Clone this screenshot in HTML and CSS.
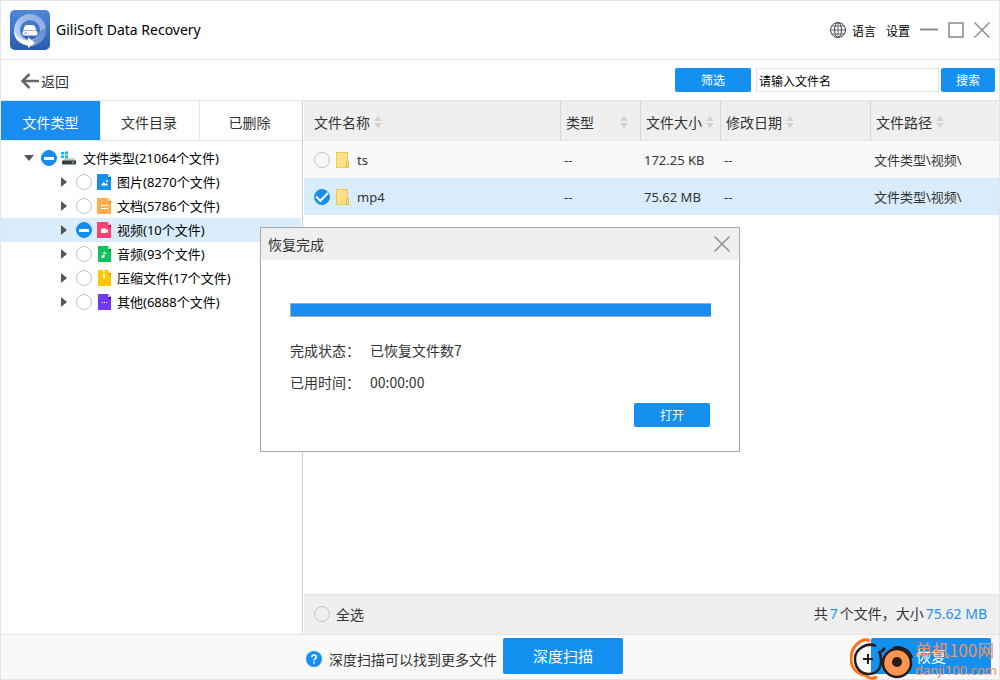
FILE: index.html
```html
<!DOCTYPE html>
<html lang="zh-CN">
<head>
<meta charset="utf-8">
<title>GiliSoft Data Recovery</title>
<link rel="stylesheet" href="styles.css">
</head>
<body>
<svg class="defs" aria-hidden="true">
  <defs>
    <linearGradient id="logo-bg" x1="0" y1="0" x2="0" y2="1"><stop offset="0" stop-color="#5087d8"/><stop offset="1" stop-color="#2a5cae"/></linearGradient>
    <linearGradient id="ring" x1="1" y1="0" x2="0" y2="1"><stop offset="0" stop-color="#86abe5"/><stop offset="1" stop-color="#c3d6f3"/></linearGradient>
    <linearGradient id="folder-fill" x1="0" y1="0" x2="1" y2="1"><stop offset="0" stop-color="#ffe48f"/><stop offset="1" stop-color="#ffdc85"/></linearGradient>
    <symbol id="folder" viewBox="0 0 14 16"><path d="M.5.5h11v9h1v6H.5z" fill="url(#folder-fill)" stroke="#efc94c"/><path d="M10.500 15.500v-4.500l1-1.500h1v6z" fill="#ffe9a8" stroke="#e3b92f"/></symbol>
    <symbol id="sort" viewBox="0 0 8 12"><path d="M4 0l4 5H0zM4 12l4-5H0z" fill="#d3d3d3"/></symbol>
    <symbol id="close" viewBox="0 0 16 16"><path d="M.5.5l15 15M15.500.5l-15 15" stroke="#8f8f8f" stroke-width="1.500" fill="none"/></symbol>
  </defs>
</svg>
<div class="app">
  <header class="titlebar">
    <svg class="logo" viewBox="0 0 40 40" aria-hidden="true">
      <rect width="40" height="40" rx="5" fill="url(#logo-bg)"/>
      <circle cx="20" cy="20" r="13" fill="none" stroke="url(#ring)" stroke-width="6"/>
      <path d="M36 18a16 16 0 0 1-13 18v-6a10 10 0 0 0 7-9z" fill="#4a79c6" opacity=".6"/>
      <path d="M4 20c2 7 6 10 14 10.500V27l7 6-7 5v-3C9 34 4 29 4 20z" fill="#fff"/>
      <path d="M17 15h6q1.500 0 2 1.500l1.500 4H13l1.500-4Q15 15 17 15z" fill="#fff"/>
      <rect x="12.500" y="21" width="15" height="4.500" rx="1.500" fill="#fff"/>
      <path d="M14.500 23.200h2" stroke="#3c70c2"/>
    </svg>
    <h1 class="title">GiliSoft Data Recovery</h1>
    <button class="bare menu-button language" type="button">
      <svg class="icon16" viewBox="0 0 16 16" fill="none" stroke="#3d434b" aria-hidden="true"><circle cx="8" cy="8" r="7.500"/><ellipse cx="8" cy="8" rx="3.500" ry="7.500"/><path d="M8 .5v15M.5 8h15M2 4h12M2 12h12" stroke-width=".8"/></svg>
      语言
    </button>
    <button class="bare menu-button" type="button">设置</button>
    <div class="window-buttons">
      <button class="bare" type="button" aria-label="最小化"><svg class="icon18" viewBox="0 0 18 18" aria-hidden="true"><path d="M0 8.500h18" stroke="#8f8f8f" stroke-width="2"/></svg></button>
      <button class="bare" type="button" aria-label="最大化"><svg class="icon16" viewBox="0 0 16 16" aria-hidden="true"><rect x="1" y="1" width="14" height="14" fill="none" stroke="#8f8f8f" stroke-width="1.600"/></svg></button>
      <button class="bare" type="button" aria-label="关闭"><svg class="icon16"><use href="#close"/></svg></button>
    </div>
  </header>

  <div class="toolbar">
    <button class="bare back" type="button"><svg class="back-icon" viewBox="0 0 18 16" fill="none" stroke="#666" stroke-width="2.500" aria-hidden="true"><path d="M8.500 1L1.500 8l7 7M1.500 8H18"/></svg>返回</button>
    <form class="search">
      <button class="primary filter" type="button">筛选</button>
      <input class="search-box" type="text" placeholder="请输入文件名" aria-label="请输入文件名">
      <button class="primary find" type="button">搜索</button>
    </form>
  </div>

  <main class="content">
    <aside class="sidebar">
      <nav class="tabs">
        <button class="tab active" type="button">文件类型</button>
        <button class="tab" type="button">文件目录</button>
        <button class="tab" type="button">已删除</button>
      </nav>
      <ul class="tree">
        <li class="node root">
          <span class="arrow open"></span>
          <input class="check partial" type="checkbox" id="n0">
          <svg class="drive" viewBox="0 0 16 14" aria-hidden="true"><path d="M0 1h3v2.500H0zM4 .5h3v3H4zM0 4.500h3V7H0zM4 4.500h3v3H4z" fill="#12b7f5"/><path d="M3 8l5-1h5l2 3H1z" fill="#c9c9c9"/><rect x="1" y="9.500" width="14" height="4" rx="1" fill="#3a3a3a"/><path d="M11 11.500h2" stroke="#45e045" stroke-width="1.500"/></svg>
          <label for="n0">文件类型(21064个文件)</label>
        </li>
        <li class="node">
          <span class="arrow"></span><input class="check" type="checkbox" id="n1">
          <svg class="file" viewBox="0 0 14 16" aria-hidden="true"><path d="M0 0h11l3 3v13H0z" fill="#168ff0"/><path d="M11 0l3 3h-3z" fill="#b9ddfb"/><path d="M11 3h3v3z" fill="#0668c5"/><path d="M4 11.500l2.500-3.500 2 2 1-1 1.500 2.500z" fill="#fff"/><circle cx="10" cy="7" r="1" fill="#fff"/></svg>
          <label for="n1">图片(8270个文件)</label>
        </li>
        <li class="node">
          <span class="arrow"></span><input class="check" type="checkbox" id="n2">
          <svg class="file" viewBox="0 0 14 16" aria-hidden="true"><path d="M0 0h11l3 3v13H0z" fill="#ffb048"/><path d="M11 0l3 3h-3z" fill="#ffe2ba"/><path d="M11 3h3v3z" fill="#f08a00"/><path d="M4 7.500h7M4 10.500h7" stroke="#fff"/></svg>
          <label for="n2">文档(5786个文件)</label>
        </li>
        <li class="node selected">
          <span class="arrow"></span><input class="check partial" type="checkbox" id="n3">
          <svg class="file" viewBox="0 0 14 16" aria-hidden="true"><path d="M0 0h11l3 3v13H0z" fill="#ff4270"/><path d="M11 0l3 3h-3z" fill="#ffc0cf"/><path d="M11 3h3v3z" fill="#c90048"/><path d="M4 6.500h5v1.500l2-1v4l-2-1v1H4z" fill="#fff"/></svg>
          <label for="n3">视频(10个文件)</label>
        </li>
        <li class="node">
          <span class="arrow"></span><input class="check" type="checkbox" id="n4">
          <svg class="file" viewBox="0 0 14 16" aria-hidden="true"><path d="M1 0h10l3 3v13H1z" fill="#0ec35e"/><path d="M11 0l3 3h-3z" fill="#b3ecca"/><path d="M11 3h3v3z" fill="#079243"/><path d="M7 10.500V6l2.500 1.500" fill="none" stroke="#fff"/><circle cx="6" cy="10.500" r="1.500" fill="#fff"/></svg>
          <label for="n4">音频(93个文件)</label>
        </li>
        <li class="node">
          <span class="arrow"></span><input class="check" type="checkbox" id="n5">
          <svg class="file" viewBox="0 0 14 16" aria-hidden="true"><path d="M1 0h10l3 3v13H1z" fill="#ffc800"/><path d="M11 0l3 3h-3z" fill="#fff0b0"/><path d="M11 3h3v3z" fill="#ef9600"/><path d="M6 0h1v1h1v1H7v1h1v1H6V3h1V2H6zM6 5h2v3H6z" fill="#fff"/></svg>
          <label for="n5">压缩文件(17个文件)</label>
        </li>
        <li class="node">
          <span class="arrow"></span><input class="check" type="checkbox" id="n6">
          <svg class="file" viewBox="0 0 14 16" aria-hidden="true"><path d="M1 0h10l3 3v13H1z" fill="#7038f0"/><path d="M11 0l3 3h-3z" fill="#d2c0fb"/><path d="M11 3h3v3z" fill="#3b00b5"/><path d="M5 8.500h1M7 8.500h1M9 8.500h1" stroke="#fff"/></svg>
          <label for="n6">其他(6888个文件)</label>
        </li>
      </ul>
    </aside>

    <section class="files">
      <div class="table-area">
        <table class="table">
          <colgroup><col class="col-name"><col class="col-type"><col class="col-size"><col class="col-date"><col></colgroup>
          <thead>
            <tr>
              <th class="name-head"><span class="head">文件名称<svg class="sort"><use href="#sort"/></svg></span></th>
              <th><span class="head spread">类型<svg class="sort"><use href="#sort"/></svg></span></th>
              <th><span class="head">文件大小<svg class="sort"><use href="#sort"/></svg></span></th>
              <th><span class="head">修改日期<svg class="sort"><use href="#sort"/></svg></span></th>
              <th><span class="head">文件路径<svg class="sort"><use href="#sort"/></svg></span></th>
            </tr>
          </thead>
          <tbody>
            <tr class="odd">
              <td class="name-cell"><span class="entry"><input class="check" type="checkbox" id="f1"><svg class="folder"><use href="#folder"/></svg><label for="f1">ts</label></span></td>
              <td>--</td><td>172.25 KB</td><td>--</td><td>文件类型\视频\</td>
            </tr>
            <tr class="selected">
              <td class="name-cell"><span class="entry"><input class="check" type="checkbox" id="f2" checked><svg class="folder"><use href="#folder"/></svg><label for="f2">mp4</label></span></td>
              <td>--</td><td>75.62 MB</td><td>--</td><td>文件类型\视频\</td>
            </tr>
          </tbody>
        </table>
      </div>
      <div class="summary">
        <input class="check" type="checkbox" id="all"><label for="all">全选</label>
        <p class="totals">共<b>7</b>个文件，大小<b>75.62 MB</b></p>
      </div>
    </section>
  </main>

  <footer class="footer">
    <svg class="icon16" viewBox="0 0 16 16" aria-hidden="true"><circle cx="8" cy="8" r="8" fill="#1790f2"/><path d="M5.800 6.200c0-3 4.400-2.800 4.400-.2 0 1.600-2.200 1.600-2.200 3.400" fill="none" stroke="#fff" stroke-width="1.600"/><path d="M7.200 10.800h1.700v1.700H7.200z" fill="#fff"/></svg>
    <span class="hint">深度扫描可以找到更多文件</span>
    <button class="primary big" type="button">深度扫描</button>
    <div class="recover">
      <button class="primary big" type="button">恢复</button>
      <div class="watermark">
        <svg class="mark" viewBox="0 0 64 42" fill="none" aria-hidden="true">
          <path d="M20 3C13-1 1 7 1 21c0 10 7 15 14 16 3 2 5 5 12 2" stroke="#ff7418" stroke-width="3"/>
          <path d="M26 8C18 4 5 10 5 21c0 9 6 15 14 15 9 0 12-7 12-14 0-4-1-7-2-9M31 14l4-4" stroke="#241b1b" stroke-width="2.500"/>
          <path d="M18 16v10M13 21h10" stroke="#241b1b" stroke-width="2"/>
          <circle cx="47" cy="25" r="14" fill="#ff9550" stroke="#241b1b" stroke-width="2.500"/>
          <path d="M43 10c8-3 17 2 19 10" stroke="#241b1b" stroke-width="2"/>
          <circle cx="47" cy="24" r="5" fill="#241b1b"/>
        </svg>
        <div class="mark-text"><span class="mark-name">单机100网</span><span class="mark-site">danji100.com</span></div>
      </div>
    </div>
  </footer>

  <div class="overlay">
    <section class="dialog" role="dialog" aria-labelledby="dialog-title">
      <header class="dialog-head">
        <h2 class="dialog-title" id="dialog-title">恢复完成</h2>
        <button class="bare" type="button" aria-label="关闭"><svg class="icon16"><use href="#close"/></svg></button>
      </header>
      <div class="dialog-body">
        <progress class="progress" value="100" max="100" aria-label="恢复进度"></progress>
        <dl class="status">
          <dt>完成状态：</dt><dd>已恢复文件数7</dd>
          <dt>已用时间：</dt><dd>00:00:00</dd>
        </dl>
        <button class="primary open-button" type="button">打开</button>
      </div>
    </section>
  </div>
</div>
</body>
</html>
```
FILE: styles.css
```css
* { box-sizing: border-box; }

body {
  margin: 0;
  color: #333;
  font: 14px/20px "Noto Sans CJK SC", sans-serif;
}

h1, h2, p, ul, dl, dd { margin: 0; padding: 0; font-weight: 400; }
svg { display: block; flex: none; }
button, input { font-family: inherit; }

.defs { position: absolute; width: 0; height: 0; }

.app {
  position: relative;
  display: flex;
  flex-direction: column;
  min-height: 100vh;
  border: 1px solid #e5e5e5;
  background: #fff;
}

.bare {
  display: flex;
  align-items: center;
  padding: 0;
  border: 0;
  background: none;
  color: #000;
}

.icon16 { width: 16px; height: 16px; }
.icon18 { width: 18px; height: 18px; }

.primary {
  height: 24px;
  padding: 0;
  border: 0;
  border-radius: 2px;
  background: #1490f0;
  color: #fff;
  font-size: 12px;
  line-height: 18px;
}

/* Title bar */
.titlebar {
  display: flex;
  align-items: center;
  height: 59px;
  padding: 0 9px;
  border-bottom: 1px solid #e5e5e5;
}
.logo { width: 40px; height: 40px; }
.title {
  flex: 1;
  margin-left: 6px;
  color: #000;
  font: 14px/20px "Noto Sans", sans-serif;
}
.menu-button { margin-right: 10px; font-size: 12px; }
.language { gap: 6px; }
.window-buttons { display: flex; align-items: center; gap: 10px; }

/* Toolbar */
.toolbar {
  display: flex;
  align-items: center;
  justify-content: space-between;
  height: 41px;
  padding: 0 4px 0 20px;
  border-bottom: 1px solid #e5e5e5;
}
.back { gap: 2px; margin-top: 2px; color: #333; font-size: 14px; }
.back-icon { width: 18px; height: 16px; }
.search { display: flex; }
.filter { width: 76px; }
.search-box {
  width: 183px;
  height: 24px;
  margin: 0 2px 0 5px;
  padding: 0 2px;
  border: 1px solid #e5e5e5;
  font-size: 12px;
}
.search-box::placeholder { color: #000; }
.find { width: 54px; }

/* Main area */
.content { display: flex; flex: 1; }
.sidebar {
  width: 302px;
  border-right: 1px solid #ccc;
}
.tabs {
  display: grid;
  grid-template-columns: 99px 99px 1fr;
  height: 40px;
  margin-right: 1px;
  border-bottom: 1px solid #e5e5e5;
}
.tab {
  padding: 2px 2px 0 0;
  border: 0;
  border-left: 1px solid #e5e5e5;
  background: #fff;
  color: #333;
  font-size: 14px;
}
.tab.active { padding-right: 0; border: 0; background: #1a8df0; color: #fff; }

.tree { margin-right: 1px; padding-top: 5px; list-style: none; }
.node {
  display: flex;
  align-items: center;
  height: 24px;
  padding-left: 60px;
  color: #000;
  font: 13px/20px "Noto Sans", "Noto Sans CJK SC", sans-serif;
}
.node.root { padding-left: 23px; }
.node label { margin-left: 6px; }
.node .check { margin: 0 5px 0 9px; }
.node.root .check { margin: 0 4px 0 7px; }
.selected { background: #d9ecfc; }

.arrow {
  border-top: 5px solid transparent;
  border-bottom: 5px solid transparent;
  border-left: 6px solid #555;
}
.arrow.open {
  border-top: 6px solid #555;
  border-right: 5px solid transparent;
  border-bottom: 0;
  border-left: 5px solid transparent;
}
.drive { width: 16px; height: 14px; }
.file { width: 14px; height: 16px; }

.check {
  display: grid;
  flex: none;
  place-items: center;
  width: 16px;
  height: 16px;
  margin: 0;
  border: 1px solid #c3c3c3;
  border-radius: 50%;
  appearance: none;
}
.node .check { background: #fff; }
.check:checked, .node .check.partial { border-color: #168cf0; background: #168cf0; }
.check.partial::after { content: ""; width: 10px; height: 3px; background: #fff; }
.check:checked::after {
  content: "";
  width: 10px;
  height: 5px;
  margin-bottom: 3px;
  border: solid #fff;
  border-width: 0 0 2px 2px;
  transform: rotate(-45deg);
}

/* File list */
.files {
  display: flex;
  flex: 1;
  flex-direction: column;
  margin-left: 1px;
}
.table-area { flex: 1; }
.table { width: 100%; border-spacing: 0; table-layout: fixed; }
.col-name { width: 256px; }
.col-type, .col-size { width: 80px; }
.col-date { width: 150px; }
.table th {
  height: 40px;
  padding: 2px 0 0 5px;
  border-bottom: 1px solid #e5e5e5;
  background: #efefef;
  font-weight: 400;
}
.table th + th { border-left: 1px solid #d5d5d5; }
.table th.name-head { padding-left: 10px; }
.head { display: flex; align-items: center; gap: 4px; }
.spread { justify-content: space-between; padding-right: 12px; }
.sort { width: 8px; height: 12px; }
.table td {
  height: 37px;
  padding: 0 0 0 4px;
  font: 13px/20px "Noto Sans", "Noto Sans CJK SC", sans-serif;
}
.table td.name-cell { padding-left: 10px; }
.odd { background: #f9f9f9; }
.entry { display: flex; align-items: center; }
.folder { width: 14px; height: 16px; margin: 0 7px 0 6px; }

.summary {
  display: flex;
  align-items: center;
  height: 40px;
  padding: 0 12px 2px 10px;
  border-top: 1px solid #e5e5e5;
  background: #efefef;
}
.summary label { margin-left: 6px; }
.totals { margin-left: auto; font-family: "Noto Sans", "Noto Sans CJK SC", sans-serif; }
.totals b { padding: 0 2px; color: #1f8ff0; font-weight: 400; }
.totals b:last-child { padding-right: 0; }

/* Footer */
.footer {
  display: flex;
  align-items: center;
  height: 45px;
  padding: 0 8px 0 305px;
  border-top: 1px solid #e5e5e5;
  background: #f9f9f9;
}
.hint { margin: 4px 6px 0 7px; }
.footer > .icon16 { margin-top: 4px; }
.big { width: 120px; height: 36px; margin-bottom: 2px; font-size: 15px; }
.recover { position: relative; margin-left: auto; }

.watermark {
  position: absolute;
  top: 0;
  right: -6px;
  display: flex;
  gap: 1px;
}
.mark { width: 64px; height: 42px; }
.mark-text {
  display: flex;
  flex-direction: column;
  color: #f09060;
  white-space: nowrap;
}
.mark-name { font-size: 17px; line-height: 24px; }
.mark-site { font: 13px/16px "Noto Sans", sans-serif; }

/* Dialog */
.overlay {
  position: absolute;
  inset: 0;
  display: grid;
  place-items: center;
  padding-bottom: 2px;
}
.dialog { width: 480px; border: 1px solid #aaa; background: #fff; }
.dialog-head {
  display: flex;
  align-items: center;
  justify-content: space-between;
  height: 32px;
  padding: 0 9px 0 7px;
  background: #efefef;
}
.dialog-title { font-size: 14px; line-height: 20px; }
.dialog-body {
  display: flex;
  flex-direction: column;
  padding: 43px 28px 24px 29px;
}
.progress {
  width: 100%;
  height: 14px;
  border: 1px solid #aaa;
  border-right: 0;
  background: #fff;
  appearance: none;
}
.progress::-webkit-progress-bar { background: #fff; }
.progress::-webkit-progress-value { background: #1a8df0; }
.status {
  display: grid;
  grid-template-columns: 80px 1fr;
  row-gap: 12px;
  margin: 23px 0 11px;
}
.open-button { align-self: flex-end; width: 76px; margin-right: 1px; }
```
